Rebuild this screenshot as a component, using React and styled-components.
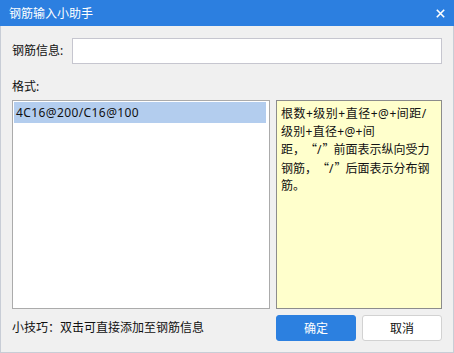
import React from "react";
import styled, { createGlobalStyle } from "styled-components";

const GlobalStyle = createGlobalStyle`
  html, body {
    margin: 0;
    padding: 0;
    background: #f0f0f0;
  }
  body {
    font-family: "Noto Sans", "Noto Sans CJK SC", sans-serif;
    font-size: 12px;
    color: #111;
  }
`;

const Window = styled.div`
  width: 454px;
  height: 353px;
  display: flex;
  flex-direction: column;
  box-sizing: border-box;
  background: #f0f0f0;
`;

const TitleBar = styled.div`
  height: 26px;
  flex: none;
  display: flex;
  align-items: center;
  justify-content: space-between;
  padding: 0 9px 0 9px;
  background: #2c7fe0;
  color: #fff;
  font-size: 12px;
`;

const CloseButton = styled.button`
  border: none;
  background: transparent;
  padding: 0;
  width: 10px;
  height: 10px;
  display: flex;
  align-items: center;
  justify-content: center;
  cursor: pointer;
`;

const Body = styled.div`
  flex: 1;
  display: flex;
  flex-direction: column;
  padding: 0 11px;
  border: 1px solid #c8cdd6;
  border-top: none;
`;

const FieldRow = styled.div`
  display: flex;
  align-items: center;
  height: 26px;
  margin-top: 12px;
`;

const Label = styled.label`
  width: 60px;
  flex: none;
  line-height: 16px;
`;

const TextInput = styled.input`
  flex: 1;
  height: 26px;
  box-sizing: border-box;
  border: 1px solid #c6c6cf;
  background: #fff;
  outline: none;
  padding: 0 4px;
  font: inherit;
`;

const SectionLabel = styled.div`
  margin-top: 15px;
  line-height: 16px;
`;

const Panels = styled.div`
  display: grid;
  grid-template-columns: 258px 166px;
  gap: 6px;
  height: 209px;
  margin-top: 5px;
`;

const ListBox = styled.div`
  border: 1px solid #ababab;
  background: #fff;
  padding: 1px 3px 1px 1px;
`;

const ListItem = styled.div`
  height: 21px;
  line-height: 21px;
  padding-left: 2px;
  letter-spacing: 0.4px;
  background: ${p => (p.selected ? "#b3cdee" : "transparent")};
  cursor: default;
`;

const HintBox = styled.div`
  border: 1px solid #8c8c8c;
  background: #ffffcc;
  padding: 4px 4px;
  line-height: 17.5px;
  white-space: nowrap;
`;

const HintLine = styled.div`
  letter-spacing: ${p => p.spacing || 0}px;
`;

const Quote = styled.span`
  display: inline-block;
  width: 12px;
  text-align: ${p => (p.open ? "right" : "left")};
  padding: ${p => (p.open ? "0 1px 0 0" : "0 0 0 1px")};
  box-sizing: border-box;
  font-family: "Noto Sans CJK SC", sans-serif;
`;

const Footer = styled.div`
  display: flex;
  align-items: center;
  height: 26px;
  margin-top: 6px;
`;

const Tip = styled.div`
  flex: 1;
  line-height: 16px;
`;

const Button = styled.button`
  width: 80px;
  height: 26px;
  box-sizing: border-box;
  border-radius: 3px;
  font: inherit;
  font-size: 12px;
  cursor: pointer;
  border: 1px solid ${p => (p.primary ? "#2c80e0" : "#d2d2d2")};
  background: ${p => (p.primary ? "#2c80e0" : "#fff")};
  color: ${p => (p.primary ? "#fff" : "#111")};
  & + & {
    margin-left: 6px;
  }
`;

const Slash = () => (
  <>
    <Quote open>“</Quote>/<Quote>”</Quote>
  </>
);

export default function App() {
  return (
    <>
      <GlobalStyle />
      <Window lang="zh-CN">
        <TitleBar>
          <span>钢筋输入小助手</span>
          <CloseButton aria-label="关闭">
            <svg width="9" height="9" viewBox="0 0 9 9">
              <path d="M0.8 0.8 L8.2 8.2 M8.2 0.8 L0.8 8.2" stroke="#fff" strokeWidth="1.6" />
            </svg>
          </CloseButton>
        </TitleBar>
        <Body>
          <FieldRow>
            <Label>钢筋信息:</Label>
            <TextInput />
          </FieldRow>
          <SectionLabel>格式:</SectionLabel>
          <Panels>
            <ListBox>
              <ListItem selected>4C16@200/C16@100</ListItem>
            </ListBox>
            <HintBox>
              <HintLine spacing={0.5}>根数+级别+直径+@+间距/</HintLine>
              <HintLine spacing={0.3}>级别+直径+@+间</HintLine>
              <HintLine>距，<Slash />前面表示纵向受力</HintLine>
              <HintLine>钢筋，<Slash />后面表示分布钢</HintLine>
              <HintLine>筋。</HintLine>
            </HintBox>
          </Panels>
          <Footer>
            <Tip>小技巧：双击可直接添加至钢筋信息</Tip>
            <Button primary>确定</Button>
            <Button>取消</Button>
          </Footer>
        </Body>
      </Window>
    </>
  );
}
